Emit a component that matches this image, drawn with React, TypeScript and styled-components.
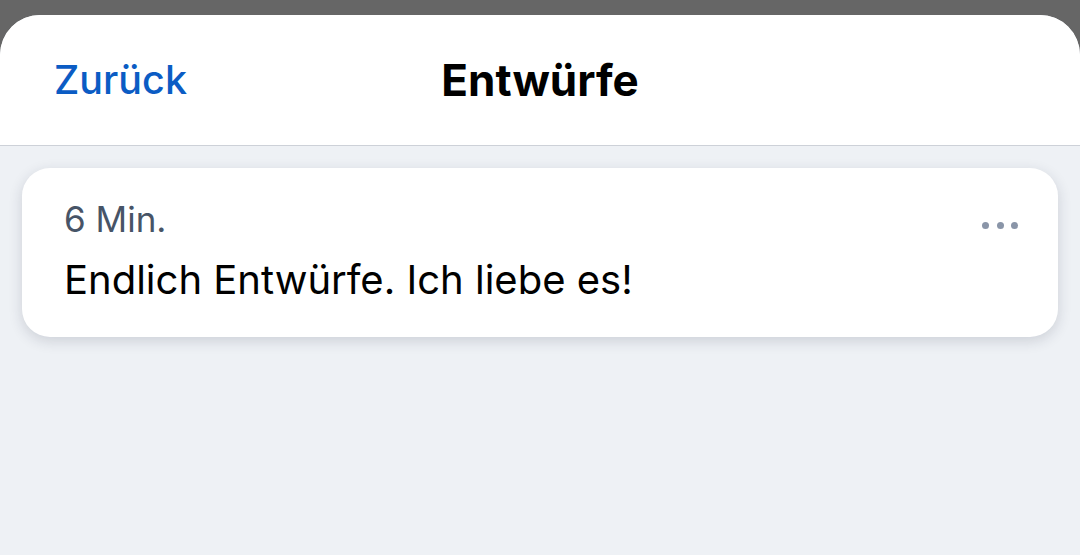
import React from 'react';
import styled, { createGlobalStyle } from 'styled-components';

const GlobalStyle = createGlobalStyle`
  html, body {
    margin: 0;
    padding: 0;
    background: #666666;
    font-family: Inter, "Noto Sans", "Liberation Sans", sans-serif;
  }
  #root {
    height: 555px;
    overflow: hidden;
  }
`;

const Backdrop = styled.div`
  height: 555px;
  padding-top: 15px;
  box-sizing: border-box;
  display: flex;
  flex-direction: column;
`;

const Sheet = styled.div`
  flex: 1 1 auto;
  display: flex;
  flex-direction: column;
  background: #eef1f5;
  border-radius: 40px 40px 0 0;
  overflow: hidden;
`;

const Header = styled.header`
  flex: 0 0 auto;
  height: 130px;
  display: grid;
  grid-template-columns: 1fr auto 1fr;
  align-items: center;
  padding: 0 54px;
  background: #ffffff;
  border-bottom: 1px solid #cdd1d8;
`;

const BackButton = styled.button`
  justify-self: start;
  border: none;
  background: none;
  padding: 0;
  font-family: inherit;
  font-size: 39.5px;
  font-weight: 500;
  color: #0b5cc4;
  cursor: pointer;
`;

const Title = styled.h1`
  margin: 0;
  font-size: 44px;
  font-weight: 700;
  color: #000000;
`;

const List = styled.main`
  flex: 1 1 auto;
  padding: 22px 22px;
`;

const Card = styled.article`
  position: relative;
  display: flex;
  flex-direction: column;
  gap: 16px;
  padding: 30px 42px 33px;
  background: #ffffff;
  border-radius: 28px;
  box-shadow: 0 4px 14px rgba(30, 40, 60, 0.16);
`;

const Time = styled.span`
  font-size: 35px;
  line-height: 42px;
  color: #475467;
`;

const Body = styled.p`
  margin: 0;
  font-size: 40px;
  line-height: 48px;
  color: #000000;
`;

const MoreButton = styled.button`
  position: absolute;
  top: 46px;
  right: 36px;
  display: flex;
  gap: 7.5px;
  padding: 8px 4px;
  border: none;
  background: none;
  cursor: pointer;
`;

const Dot = styled.span`
  width: 7px;
  height: 7px;
  border-radius: 50%;
  background: #8a95a8;
`;

export default function App() {
  return (
    <>
      <GlobalStyle />
      <Backdrop>
        <Sheet>
          <Header>
            <BackButton>Zurück</BackButton>
            <Title>Entwürfe</Title>
            <span />
          </Header>
          <List>
            <Card>
              <Time>6 Min.</Time>
              <Body>Endlich Entwürfe. Ich liebe es!</Body>
              <MoreButton aria-label="Mehr">
                <Dot />
                <Dot />
                <Dot />
              </MoreButton>
            </Card>
          </List>
        </Sheet>
      </Backdrop>
    </>
  );
}
